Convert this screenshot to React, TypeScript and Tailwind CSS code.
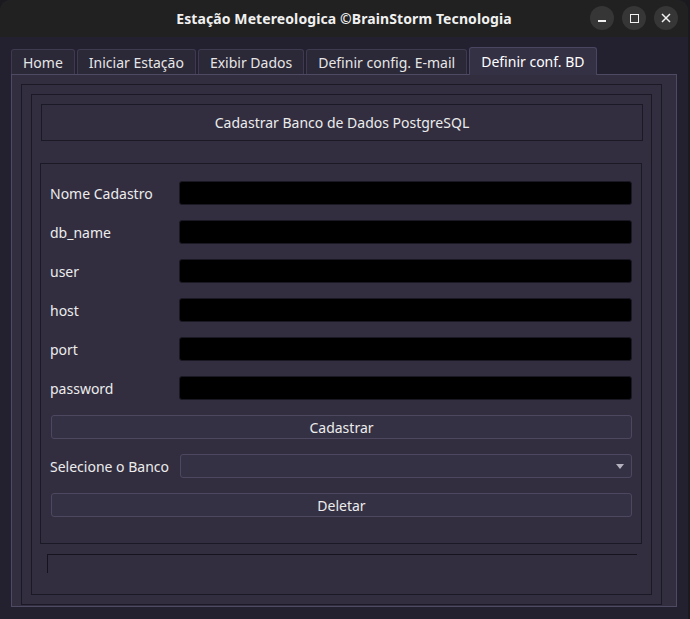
import React from 'react';

const tabs = ['Home', 'Iniciar Estação', 'Exibir Dados', 'Definir config. E-mail'];
const fields = ['Nome Cadastro', 'db_name', 'user', 'host', 'port', 'password'];

const font = { fontFamily: '"Noto Sans", "DejaVu Sans", sans-serif' };

const TitleButton: React.FC<{ children: React.ReactNode }> = ({ children }) => (
  <div className="w-[24px] h-[24px] rounded-full bg-[#363636] flex items-center justify-center">{children}</div>
);

export default function App() {
  return (
    <div className="w-[690px] h-[619px] bg-[#1b1a1f] text-[#ececec]" style={font}>
      <div className="w-[688px] h-[619px] bg-[#232030] rounded-t-[10px] overflow-hidden flex flex-col">
        {/* title bar */}
        <div className="h-[37px] bg-[#212121] flex items-center relative shrink-0">
          <div className="w-full text-center text-[14px] font-bold text-[#f0f0f0] tracking-[0.1px]">
            Estação Metereologica ©BrainStorm Tecnologia
          </div>
          <div className="absolute right-[10px] top-[6px] flex gap-[8px]">
            <TitleButton>
              <div className="w-[8px] h-[2px] bg-[#f0f0f0] mt-[5px]" />
            </TitleButton>
            <TitleButton>
              <div className="w-[9px] h-[9px] border-[1.5px] border-[#f0f0f0]" />
            </TitleButton>
            <TitleButton>
              <svg width="10" height="10" viewBox="0 0 10 10">
                <path d="M1 1 L9 9 M9 1 L1 9" stroke="#f0f0f0" strokeWidth="1.5" />
              </svg>
            </TitleButton>
          </div>
        </div>

        <div className="pl-[11px] pt-[10px]">
          {/* tab bar */}
          <div className="flex items-end h-[28px] gap-[2px] relative z-10">
            {tabs.map((t) => (
              <div
                key={t}
                className="h-[25px] mb-px px-[11px] flex items-center text-[14px] text-[#e6e6e6] bg-[#2b2838] border border-b-0 border-[#3f3a4f] rounded-t-[3px]"
              >
                {t}
              </div>
            ))}
            <div className="h-[28px] px-[11px] pb-px flex items-center text-[14px] text-white bg-[#353145] border border-b-0 border-[#4a4560] rounded-t-[3px]">
              Definir conf. BD
            </div>
          </div>

          {/* pane */}
          <div className="w-[666px] h-[533px] -mt-px border border-[#4f4a63] bg-[#322e40] p-[9px]">
            <div className="w-[641px] h-[521px] border border-[#1c1927] p-[9px]">
              <div className="w-[621px] h-[501px] border border-[#1c1927] pt-[9px] pl-[9px]">
                <div className="w-[602px] h-[37px] border border-[#1c1927] flex items-center justify-center text-[14px]">
                  Cadastrar Banco de Dados PostgreSQL
                </div>

                <div className="w-[602px] h-[381px] -ml-px mt-[22px] border border-[#1c1927] pt-[17px] px-[9px]">
                  {fields.map((f, i) => (
                    <div key={f} className={`flex items-center h-[24px] ${i > 0 ? 'mt-[15px]' : ''}`}>
                      <div className="w-[129px] text-[14px]">{f}</div>
                      <div className="flex-1 h-[24px] bg-black border border-[#1a1822] rounded-[3px]" />
                    </div>
                  ))}

                  <div className="ml-[1px] mt-[15px] h-[24px] border border-[#4d4860] bg-[#353144] rounded-[3px] flex items-center justify-center text-[14px]">
                    Cadastrar
                  </div>

                  <div className="flex items-center h-[24px] mt-[15px]">
                    <div className="w-[130px] text-[14px]">Selecione o Banco</div>
                    <div className="flex-1 h-[24px] border border-[#4d4860] bg-[#353144] rounded-[3px] flex items-center justify-end pr-[7px]">
                      <svg width="8" height="5" viewBox="0 0 8 5">
                        <path d="M0 0 H8 L4 5 Z" fill="#b5b2bf" />
                      </svg>
                    </div>
                  </div>

                  <div className="ml-[1px] mt-[15px] h-[24px] border border-[#4d4860] bg-[#353144] rounded-[3px] flex items-center justify-center text-[14px]">
                    Deletar
                  </div>
                </div>

                <div className="w-[590px] h-[19px] ml-[6px] mt-[10px] border-t border-l border-[#16131f]" />
              </div>
            </div>
          </div>
        </div>
      </div>
    </div>
  );
}
